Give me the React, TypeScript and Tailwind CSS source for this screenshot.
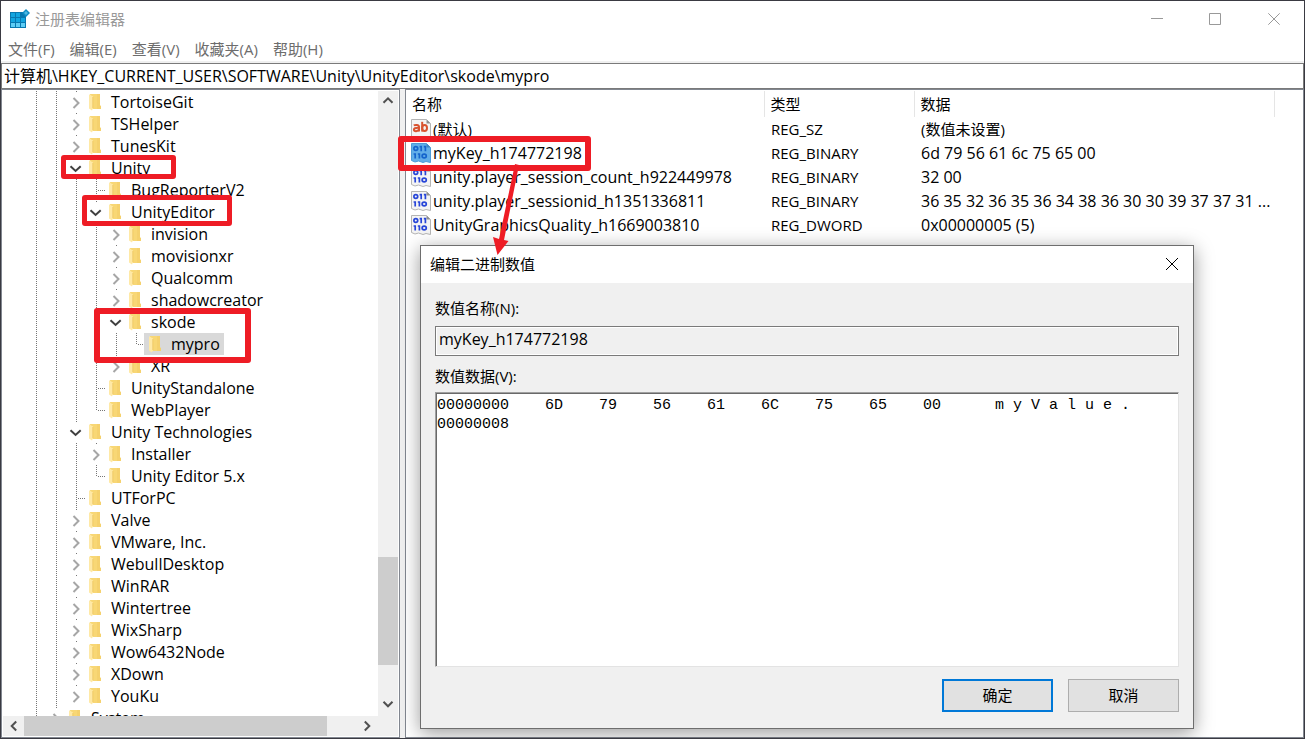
import React from "react";

type Cell = "line" | "open" | "closed" | "tee" | "elbow";
type Node = { name: string; cells: Cell[]; selected?: boolean };

const L: Cell = "line";
const O: Cell = "open";
const C: Cell = "closed";
const T: Cell = "tee";
const E: Cell = "elbow";

const nodes: Node[] = [
  { name: "TortoiseGit", cells: [L, L, C] },
  { name: "TSHelper", cells: [L, L, C] },
  { name: "TunesKit", cells: [L, L, C] },
  { name: "Unity", cells: [L, L, O] },
  { name: "BugReporterV2", cells: [L, L, L, T] },
  { name: "UnityEditor", cells: [L, L, L, O] },
  { name: "invision", cells: [L, L, L, L, C] },
  { name: "movisionxr", cells: [L, L, L, L, C] },
  { name: "Qualcomm", cells: [L, L, L, L, C] },
  { name: "shadowcreator", cells: [L, L, L, L, C] },
  { name: "skode", cells: [L, L, L, L, O] },
  { name: "mypro", cells: [L, L, L, L, L, E], selected: true },
  { name: "XR", cells: [L, L, L, L, C] },
  { name: "UnityStandalone", cells: [L, L, L, T] },
  { name: "WebPlayer", cells: [L, L, L, E] },
  { name: "Unity Technologies", cells: [L, L, O] },
  { name: "Installer", cells: [L, L, L, C] },
  { name: "Unity Editor 5.x", cells: [L, L, L, E] },
  { name: "UTForPC", cells: [L, L, T] },
  { name: "Valve", cells: [L, L, C] },
  { name: "VMware, Inc.", cells: [L, L, C] },
  { name: "WebullDesktop", cells: [L, L, C] },
  { name: "WinRAR", cells: [L, L, C] },
  { name: "Wintertree", cells: [L, L, C] },
  { name: "WixSharp", cells: [L, L, C] },
  { name: "Wow6432Node", cells: [L, L, C] },
  { name: "XDown", cells: [L, L, C] },
  { name: "YouKu", cells: [L, L, C] },
  { name: "System", cells: [L, C] },
];

const values = [
  { icon: "ab", name: "(默认)", type: "REG_SZ", data: "(数值未设置)" },
  { icon: "sel", name: "myKey_h174772198", type: "REG_BINARY", data: "6d 79 56 61 6c 75 65 00" },
  { icon: "bin", name: "unity.player_session_count_h922449978", type: "REG_BINARY", data: "32 00" },
  { icon: "bin", name: "unity.player_sessionid_h1351336811", type: "REG_BINARY", data: "36 35 32 36 35 36 34 38 36 30 30 39 37 37 31 ..." },
  { icon: "bin", name: "UnityGraphicsQuality_h1669003810", type: "REG_DWORD", data: "0x00000005 (5)" },
];

const hexDump =
  "00000000    6D    79    56    61    6C    75    65    00      m y V a l u e .\n00000008";

function Dots({ className }: { className: string }) {
  return (
    <span
      className={
        "w-px bg-[repeating-linear-gradient(to_bottom,#767676_0px,#767676_1px,transparent_1px,transparent_2px)] " +
        className
      }
    />
  );
}

function TreeCell({ kind }: { kind: Cell }) {
  if (kind === "line")
    return (
      <span className="flex w-5 shrink-0 pl-2.5">
        <Dots className="h-full" />
      </span>
    );
  if (kind === "tee" || kind === "elbow")
    return (
      <span className="flex w-5 shrink-0 pl-2.5">
        <Dots className={kind === "tee" ? "h-full" : "h-3"} />
        <span className="mt-[11px] ml-px h-px w-2 bg-[repeating-linear-gradient(to_right,#767676_0px,#767676_1px,transparent_1px,transparent_2px)]" />
      </span>
    );
  return (
    <span className="flex w-5 shrink-0 flex-col">
      <span className="ml-2.5 h-px w-px bg-[#767676]" />
      <svg viewBox="0 0 20 21" className="h-[21px] w-5" fill="none" aria-hidden="true">
        {kind === "closed" ? (
          <path d="M7.5 6 L12.5 11 L7.5 16" stroke="#a6a6a6" strokeWidth="2" />
        ) : (
          <path d="M4.5 8.2 L9.6 13 L14.7 8.2" stroke="#404040" strokeWidth="2" />
        )}
      </svg>
    </span>
  );
}

function Folder() {
  return (
    <svg viewBox="0 0 14 18" className="h-[18px] w-3.5 shrink-0" aria-hidden="true">
      <path d="M2 1 H12 V12.5 L13 13 V16 H4 Z" fill="#f8d775" />
      <path d="M9 1 H12 V12.5 L13 13 V16 H9 Z" fill="#f3cf69" opacity="0.7" />
      <path d="M1 1.2 L5 3.5 V15 L4 17.6 L1 15.5 Z" fill="#ffe9a6" />
      <path d="M4.5 4 H5.2 V15 H4.5 Z" fill="#e9bf55" />
    </svg>
  );
}

function Chevron({ dir }: { dir: "up" | "down" | "left" | "right" }) {
  const d = {
    up: "M3.5 9.8 L8 5.3 L12.5 9.8",
    down: "M3.5 5.8 L8 10.3 L12.5 5.8",
    left: "M10.2 3.5 L5.7 8 L10.2 12.5",
    right: "M5.8 3.5 L10.3 8 L5.8 12.5",
  }[dir];
  return (
    <svg viewBox="0 0 16 16" className="size-4" fill="none" aria-hidden="true">
      <path d={d} stroke="#505050" strokeWidth="2" />
    </svg>
  );
}

function ValueIcon({ kind }: { kind: string }) {
  const selected = kind === "sel";
  const ink = selected ? "#1464cc" : "#2846d8";
  return (
    <svg viewBox="0 0 20 20" className="size-5 shrink-0" aria-hidden="true">
      <path
        d="M0.5 0.5 H15.5 L19.5 4.5 V19.5 L15 18.5 L12 19.5 L7.5 18 L4 19 L0.5 17.5 Z"
        fill={selected ? "#62aee8" : "#f4f4f4"}
        stroke={selected ? "#4d9ad8" : "#b4b4b4"}
      />
      <path d="M15.5 0.5 V4.5 H19.5 Z" fill={selected ? "#3f86c0" : "#8f8f8f"} />
      {kind === "ab" ? (
        <g fill="none" stroke="#d8532f" strokeWidth="2">
          <path d="M2.8 6.6 C4 5.6 8 5.4 8 8 V12.6" />
          <path d="M8 8.8 C4 8.6 2.9 9.6 2.9 10.8 C2.9 12.8 7 12.6 8 10.4" />
          <path d="M11.2 2.8 V12.6" />
          <ellipse cx="13.6" cy="9" rx="2.4" ry="2.9" />
        </g>
      ) : (
        <g fill="none" stroke={ink} strokeWidth="1.7">
          <ellipse cx="4.8" cy="5.5" rx="1.9" ry="1.9" />
          <path d="M8.6 3.6 H10.2 V8.2 M12.8 3.6 H14.4 V8.2" />
          <path d="M2.6 11 H4.2 V15.6 M6.8 11 H8.4 V15.6" />
          <ellipse cx="13.2" cy="13" rx="2.1" ry="1.9" />
        </g>
      )}
    </svg>
  );
}

function AppIcon() {
  return (
    <svg viewBox="0 0 20 20" className="size-5" aria-hidden="true">
      <path d="M0 3 H11 L16 8 V19 H0 Z" fill="#0878b0" />
      <g fill="#12a5e0">
        <path d="M1 4 H5 V8 H1 Z M6 4 H10 V8 H6 Z" />
        <path d="M1 9 H5 V13 H1 Z M6 9 H10 V13 H6 Z M11 9 H15 V13 H11 Z" />
      </g>
      <g fill="#5ecdf5">
        <path d="M1 14 H5 V18 H1 Z M6 14 H10 V18 H6 Z M11 14 H15 V18 H11 Z" />
      </g>
      <path d="M11 3 H13 L16 6 V8 H11 Z" fill="#0878b0" />
      <path d="M16 0 L20 4 L16 8 L12 4 Z" fill="#0f8cc4" />
      <path d="M16 2 L18 4 L16 6 L14 4 Z" fill="#4fb9e4" />
    </svg>
  );
}

export default function App() {
  return (
    <div className="relative flex h-screen flex-col overflow-hidden border border-[#3a3a42] bg-white font-['Open_Sans','Noto_Sans_CJK_SC',sans-serif] text-[15px] leading-[22px] text-black">
      <header className="flex h-9 shrink-0 items-center justify-between pl-[9px] text-[#999999]">
        <div className="flex items-center gap-[5px]">
          <AppIcon />
          <h1>注册表编辑器</h1>
        </div>
        <div className="flex">
          <button aria-label="最小化" className="flex w-[58px] justify-center">
            <svg viewBox="0 0 12 12" className="size-3" fill="none" stroke="#999"><path d="M0 5.5 H12" /></svg>
          </button>
          <button aria-label="最大化" className="flex w-[58px] justify-center">
            <svg viewBox="0 0 12 12" className="size-3" fill="none" stroke="#999"><path d="M0.5 0.5 H11.5 V11.5 H0.5 Z" /></svg>
          </button>
          <button aria-label="关闭" className="flex w-[60px] justify-center">
            <svg viewBox="0 0 12 12" className="size-3" fill="none" stroke="#999"><path d="M0.3 0.3 L11.7 11.7 M11.7 0.3 L0.3 11.7" /></svg>
          </button>
        </div>
      </header>

      <nav className="flex h-[26px] shrink-0 items-center gap-[15px] border-b-2 border-[#f0f0f0] pl-[7px] text-[#6d6d6d]">
        <button>文件(F)</button>
        <button>编辑(E)</button>
        <button>查看(V)</button>
        <button>收藏夹(A)</button>
        <button>帮助(H)</button>
      </nav>

      <input
        aria-label="地址"
        className="h-[26px] w-full shrink-0 border border-[#7a7a7a] pb-0.5 pl-0.5 text-base outline-none"
        defaultValue="计算机\HKEY_CURRENT_USER\SOFTWARE\Unity\UnityEditor\skode\mypro"
      />

      <main className="flex min-h-0 grow bg-[#f0f0f0]">
        <section className="flex w-[399px] shrink-0 flex-col border border-[#828790] bg-white p-px">
          <div className="flex min-h-0 grow">
            <ul className="grow overflow-hidden pl-[23px] text-base leading-[22px]">
              {nodes.map((n) => (
                <li key={n.name} className="flex h-[22px]">
                  {n.cells.map((c, i) => (
                    <TreeCell key={i} kind={c} />
                  ))}
                  <span className={n.selected ? "-ml-0.5 flex items-center bg-[#d9d9d9] pr-1 pl-1" : "flex items-center pl-0.5"}>
                    <Folder />
                    <span className="pl-[9px]">{n.name}</span>
                  </span>
                </li>
              ))}
            </ul>
            <div className="flex w-5 shrink-0 flex-col items-center bg-[#f0f0f0]">
              <button aria-label="向上滚动" className="flex h-5 items-center"><Chevron dir="up" /></button>
              <span className="grow-[448]" />
              <span className="w-full grow-[108] bg-[#cdcdcd]" />
              <span className="grow-[27]" />
              <button aria-label="向下滚动" className="flex h-6 items-center"><Chevron dir="down" /></button>
            </div>
          </div>
          <div className="flex h-5 shrink-0 items-stretch bg-[#f0f0f0] pr-5">
            <button aria-label="向左滚动" className="flex w-[21px] items-center justify-center"><Chevron dir="left" /></button>
            <span className="grow-[302] bg-[#cdcdcd]" />
            <span className="grow-[29]" />
            <button aria-label="向右滚动" className="flex w-[22px] items-center justify-center"><Chevron dir="right" /></button>
          </div>
        </section>

        <section className="ml-[5px] min-w-0 grow overflow-hidden border border-[#828790] bg-white pt-px">
          <table className="w-full table-fixed border-collapse">
            <colgroup>
              <col className="w-[358px]" />
              <col className="w-[150px]" />
              <col className="w-[360px]" />
              <col />
            </colgroup>
            <thead>
              <tr className="h-[26px] text-left">
                <th className="border-r border-[#e5e5e5] pl-1.5 font-normal">名称</th>
                <th className="border-r border-[#e5e5e5] pl-1.5 font-normal">类型</th>
                <th className="border-r border-[#e5e5e5] pl-1.5 font-normal">数据</th>
                <th />
              </tr>
            </thead>
            <tbody>
              {values.map((v) => (
                <tr key={v.name} className="h-6 whitespace-nowrap">
                  <td className="pl-[5px]">
                    <span className={v.icon === "ab" ? "flex items-center gap-0.5" : "flex items-center gap-0.5 text-base leading-[22px]"}>
                      <ValueIcon kind={v.icon} />
                      {v.name}
                    </span>
                  </td>
                  <td className="pl-[7px]">{v.type}</td>
                  <td className={v.icon === "ab" ? "pl-[7px]" : "pl-[7px] text-base leading-[22px]"}>{v.data}</td>
                  <td />
                </tr>
              ))}
            </tbody>
          </table>
        </section>
      </main>

      <div
        role="dialog"
        aria-labelledby="dlg-title"
        className="absolute top-[244px] left-[419px] flex h-[484px] w-[774px] flex-col border border-[#6e6e6e] bg-[#f0f0f0] shadow-[0_4px_18px_rgba(0,0,0,0.4)]"
      >
        <div className="flex h-[37px] shrink-0 items-center justify-between bg-white pr-3.5 pb-px pl-[9px]">
          <h2 id="dlg-title">编辑二进制数值</h2>
          <button aria-label="关闭对话框">
            <svg viewBox="0 0 14 14" className="size-3.5" fill="none" stroke="#000"><path d="M1 1 L13 13 M13 1 L1 13" /></svg>
          </button>
        </div>
        <div className="flex min-h-0 grow flex-col px-3.5 pt-3.5 pb-4">
          <label htmlFor="value-name">数值名称(N):</label>
          <input
            id="value-name"
            readOnly
            defaultValue="myKey_h174772198"
            className="mt-[7px] h-[30px] w-full shrink-0 border border-[#7a7a7a] bg-[#f0f0f0] pb-1 pl-[3px] text-base shadow-[inset_0_0_0_1px_#fff] outline-none"
          />
          <label htmlFor="value-data" className="mt-[9px]">数值数据(V):</label>
          <textarea
            id="value-data"
            defaultValue={hexDump}
            spellCheck={false}
            className="mt-[5px] min-h-0 w-full grow resize-none overflow-hidden border border-t-[#a0a0a0] border-r-[#e3e3e3] border-b-[#e3e3e3] border-l-[#a0a0a0] bg-white pt-[3px] pl-px font-['Liberation_Mono',monospace] text-[15px] leading-[19px] whitespace-pre shadow-[inset_1px_1px_0_#696969] outline-none"
          />
          <div className="mt-3 flex shrink-0 justify-end gap-[15px]">
            <button className="h-[33px] w-[111px] border-2 border-[#0078d7] bg-[#e1e1e1] pb-0.5">确定</button>
            <button className="h-[33px] w-[111px] border border-[#adadad] bg-[#e1e1e1] pb-0.5">取消</button>
          </div>
        </div>
      </div>

      <div className="pointer-events-none absolute top-[154px] left-[60px] h-6 w-[115px] rounded-[3px] border-[5px] border-[#ee1c25]" />
      <div className="pointer-events-none absolute top-[194px] left-[81px] h-[31px] w-[150px] rounded-[3px] border-[5px] border-[#ee1c25]" />
      <div className="pointer-events-none absolute top-[307px] left-[93px] h-[55px] w-[157px] rounded-[3px] border-[6px] border-[#ee1c25]" />
      <div className="pointer-events-none absolute top-[135px] left-[397px] h-[35px] w-[193px] rounded-[3px] border-[6px] border-[#ee1c25]" />
      <svg viewBox="0 0 40 100" className="pointer-events-none absolute top-[159px] left-[485px] h-[100px] w-10" aria-hidden="true">
        <path d="M29 4 L33 5 L18 80 L22.5 81 L11.5 95 L7 77 L13 79 Z" fill="#ee1c25" />
      </svg>
    </div>
  );
}
